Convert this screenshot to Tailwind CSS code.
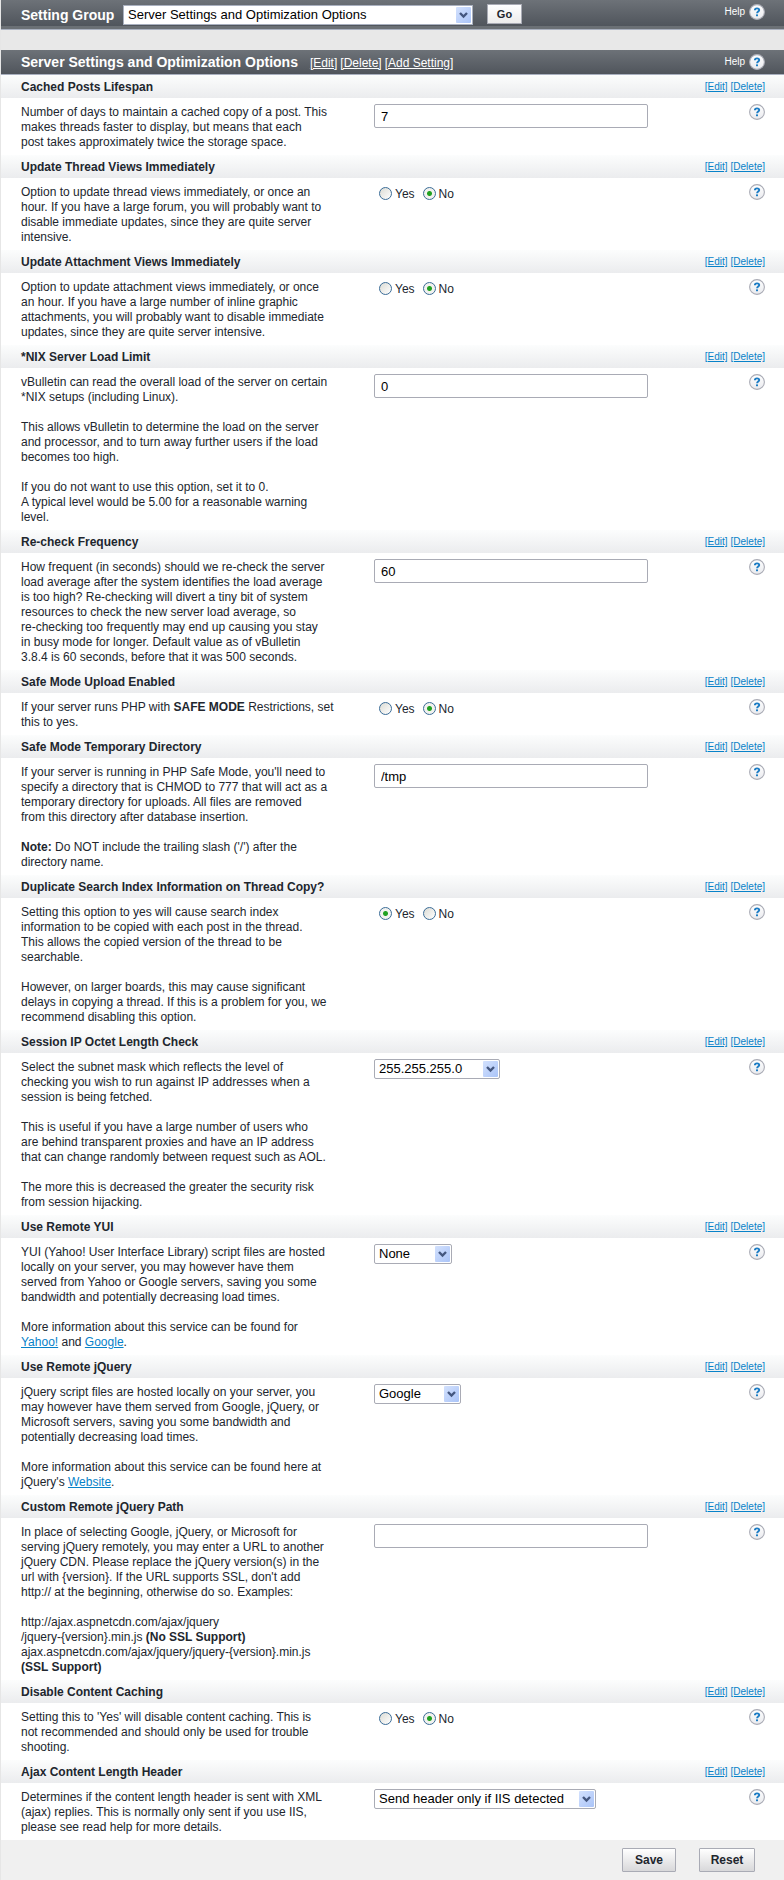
<!DOCTYPE html>
<html lang="en">
<head>
<meta charset="utf-8">
<meta name="viewport" content="width=device-width, initial-scale=1">
<title>Server Settings and Optimization Options</title>
<script src="https://cdn.jsdelivr.net/npm/@tailwindcss/browser@4"></script>
</head>
<body class="bg-[#f0f0f0] font-['Liberation_Sans',Arial,sans-serif] text-xs text-[#21262e]">
<svg class="absolute size-0" aria-hidden="true">
  <linearGradient id="disc" x1="0" y1="0" x2="0" y2="1"><stop offset="0" stop-color="#ffffff"/><stop offset="1" stop-color="#e9eaee"/></linearGradient>
  <linearGradient id="drop" x1="0" y1="0" x2="1" y2="1"><stop offset="0" stop-color="#d3e1fd"/><stop offset="1" stop-color="#aac4f8"/></linearGradient>
  <symbol id="help" viewBox="0 0 16 16">
    <circle cx="8" cy="8" r="7.4" fill="url(#disc)" stroke="#a9abb5" stroke-width="1.1"/>
    <path d="M5.9 6.3C5.9 4.9 6.8 4.4 8 4.4s2.2.6 2.2 1.7c0 1.5-2.1 1.5-2.1 3.2" fill="none" stroke="#1c7cc4" stroke-width="1.9"/>
    <rect x="7" y="10.4" width="2" height="1.8" fill="#1c7cc4"/>
  </symbol>
  <symbol id="arrow" viewBox="0 0 15 16">
    <rect width="15" height="16" rx="1" fill="url(#drop)"/>
    <path d="M4 6l3.5 3.5L11 6" fill="none" stroke="#44577f" stroke-width="2.4"/>
  </symbol>
</svg>

<form class="border-l border-[#e6e6e6]">
  <div class="border-b border-[#a9b0bf] bg-[#6b7075] pb-[3px]">
    <div class="flex h-[26px] items-start justify-between bg-linear-to-b from-[#6d7278] to-[#50555c] pl-5 pr-[19px]">
      <div class="flex items-start">
        <label for="group" class="w-[102px] pt-[6px] text-[14px] leading-[18px] font-bold whitespace-nowrap text-white">Setting Group</label>
        <div class="relative mt-[5px]">
          <select id="group" class="block h-5 w-[350px] appearance-none border border-[#a9b0bf] bg-white pl-1 text-[13px] leading-[18px] text-black"><option>Server Settings and Optimization Options</option></select>
          <svg class="pointer-events-none absolute top-[2px] right-[2px] h-4 w-[15px]"><use href="#arrow"/></svg>
        </div>
        <button type="button" class="mt-1 ml-[14px] h-5 w-[35px] border border-[#a9abb5] bg-linear-to-b from-white to-[#ececec] text-[11px] leading-[18px] font-bold">Go</button>
      </div>
      <a href="#" class="mt-1 flex gap-1 text-[10px] leading-[15px] text-white">Help <svg class="size-4"><use href="#help"/></svg></a>
    </div>
  </div>

  <div class="h-5 bg-[#e8e8e8]"></div>

  <div class="flex h-[25px] items-start justify-between border-b border-[#a9b0bf] bg-linear-to-b from-[#6d7278] to-[#50555c] pl-5 pr-[19px] text-white">
    <div class="flex items-baseline gap-3 pt-[3px]">
      <h1 class="text-[14px] leading-[18px] font-bold">Server Settings and Optimization Options</h1>
      <div class="flex gap-[3px] leading-[18px] underline"><a href="#">[Edit]</a><a href="#">[Delete]</a><a href="#">[Add Setting]</a></div>
    </div>
    <a href="#" class="mt-1 flex gap-1 text-[10px] leading-[15px]">Help <svg class="size-4"><use href="#help"/></svg></a>
  </div>

  <main id="settings" class="bg-white
    [&_header]:flex [&_header]:h-[23px] [&_header]:items-start [&_header]:justify-between [&_header]:bg-linear-to-b [&_header]:from-[#fcfdfd] [&_header]:to-[#ebecee] [&_header]:pl-5 [&_header]:pr-[19px]
    [&_h2]:pt-[5px] [&_h2]:font-bold [&_h2]:leading-[15px]
    [&_nav]:flex [&_nav]:gap-[3px] [&_nav]:pt-1 [&_nav]:text-[10px] [&_nav]:leading-[15px] [&_nav]:text-[#0782c9] [&_nav]:underline
    [&_article]:grid [&_article]:grid-cols-[353px_1fr_auto] [&_article]:items-start [&_article]:pt-[6px] [&_article]:pb-[5px] [&_article]:pl-5 [&_article]:pr-[19px]
    [&_p]:pt-px [&_p]:leading-[15px] [&_p]:whitespace-pre-line [&_p_a]:text-[#0782c9] [&_p_a]:underline
    [&_input[type=text]]:h-6 [&_input[type=text]]:w-[274px] [&_input[type=text]]:rounded-[2px] [&_input[type=text]]:border [&_input[type=text]]:border-[#a9abb5] [&_input[type=text]]:px-[6px] [&_input[type=text]]:text-[13px] [&_input[type=text]]:text-black
    [&_fieldset]:flex [&_fieldset]:gap-2 [&_fieldset]:pt-[2px] [&_fieldset]:pl-[5px]
    [&_label]:flex [&_label]:gap-[3px] [&_label]:leading-[17px]
    [&_input[type=radio]]:mt-px [&_input[type=radio]]:size-[13px] [&_input[type=radio]]:appearance-none [&_input[type=radio]]:rounded-full [&_input[type=radio]]:border [&_input[type=radio]]:border-[#3b6c97] [&_input[type=radio]]:bg-linear-to-br [&_input[type=radio]]:from-[#dcdcd5] [&_input[type=radio]]:to-white
    [&_input:checked]:bg-[radial-gradient(circle,#21a121_0_2px,#f2f2ef_3px)]!
    [&_select]:block [&_select]:h-5 [&_select]:w-full [&_select]:appearance-none [&_select]:rounded-[2px] [&_select]:border [&_select]:border-[#a9abb5] [&_select]:bg-white [&_select]:pl-1 [&_select]:text-[13px] [&_select]:leading-[18px] [&_select]:text-black
    [&_div_svg]:pointer-events-none [&_div_svg]:absolute [&_div_svg]:top-[2px] [&_div_svg]:right-[2px] [&_div_svg]:h-4 [&_div_svg]:w-[15px]
    [&_button]:size-4 [&_button_svg]:size-4">

    <section>
      <header><h2>Cached Posts Lifespan</h2><nav><a href="#">[Edit]</a><a href="#">[Delete]</a></nav></header>
      <article><p>Number of days to maintain a cached copy of a post. This
makes threads faster to display, but means that each
post takes approximately twice the storage space.</p>
      <input type="text" value="7" aria-label="Cached Posts Lifespan"><button type="button" aria-label="Help"><svg><use href="#help"/></svg></button></article>
    </section>

    <section>
      <header><h2>Update Thread Views Immediately</h2><nav><a href="#">[Edit]</a><a href="#">[Delete]</a></nav></header>
      <article><p>Option to update thread views immediately, or once an
hour. If you have a large forum, you will probably want to
disable immediate updates, since they are quite server
intensive.</p>
      <fieldset aria-label="Update Thread Views Immediately"><label><input type="radio" name="thread">Yes</label><label><input type="radio" name="thread" checked>No</label></fieldset><button type="button" aria-label="Help"><svg><use href="#help"/></svg></button></article>
    </section>

    <section>
      <header><h2>Update Attachment Views Immediately</h2><nav><a href="#">[Edit]</a><a href="#">[Delete]</a></nav></header>
      <article><p>Option to update attachment views immediately, or once
an hour. If you have a large number of inline graphic
attachments, you will probably want to disable immediate
updates, since they are quite server intensive.</p>
      <fieldset aria-label="Update Attachment Views Immediately"><label><input type="radio" name="attach">Yes</label><label><input type="radio" name="attach" checked>No</label></fieldset><button type="button" aria-label="Help"><svg><use href="#help"/></svg></button></article>
    </section>

    <section>
      <header><h2>*NIX Server Load Limit</h2><nav><a href="#">[Edit]</a><a href="#">[Delete]</a></nav></header>
      <article><p>vBulletin can read the overall load of the server on certain
*NIX setups (including Linux).

This allows vBulletin to determine the load on the server
and processor, and to turn away further users if the load
becomes too high.

If you do not want to use this option, set it to 0.
A typical level would be 5.00 for a reasonable warning
level.</p>
      <input type="text" value="0" aria-label="*NIX Server Load Limit"><button type="button" aria-label="Help"><svg><use href="#help"/></svg></button></article>
    </section>

    <section>
      <header><h2>Re-check Frequency</h2><nav><a href="#">[Edit]</a><a href="#">[Delete]</a></nav></header>
      <article><p>How frequent (in seconds) should we re-check the server
load average after the system identifies the load average
is too high? Re-checking will divert a tiny bit of system
resources to check the new server load average, so
re-checking too frequently may end up causing you stay
in busy mode for longer. Default value as of vBulletin
3.8.4 is 60 seconds, before that it was 500 seconds.</p>
      <input type="text" value="60" aria-label="Re-check Frequency"><button type="button" aria-label="Help"><svg><use href="#help"/></svg></button></article>
    </section>

    <section>
      <header><h2>Safe Mode Upload Enabled</h2><nav><a href="#">[Edit]</a><a href="#">[Delete]</a></nav></header>
      <article><p>If your server runs PHP with <b>SAFE MODE</b> Restrictions, set
this to yes.</p>
      <fieldset aria-label="Safe Mode Upload Enabled"><label><input type="radio" name="safe">Yes</label><label><input type="radio" name="safe" checked>No</label></fieldset><button type="button" aria-label="Help"><svg><use href="#help"/></svg></button></article>
    </section>

    <section>
      <header><h2>Safe Mode Temporary Directory</h2><nav><a href="#">[Edit]</a><a href="#">[Delete]</a></nav></header>
      <article><p>If your server is running in PHP Safe Mode, you'll need to
specify a directory that is CHMOD to 777 that will act as a
temporary directory for uploads. All files are removed
from this directory after database insertion.

<b>Note:</b> Do NOT include the trailing slash ('/') after the
directory name.</p>
      <input type="text" value="/tmp" aria-label="Safe Mode Temporary Directory"><button type="button" aria-label="Help"><svg><use href="#help"/></svg></button></article>
    </section>

    <section>
      <header><h2>Duplicate Search Index Information on Thread Copy?</h2><nav><a href="#">[Edit]</a><a href="#">[Delete]</a></nav></header>
      <article><p>Setting this option to yes will cause search index
information to be copied with each post in the thread.
This allows the copied version of the thread to be
searchable.

However, on larger boards, this may cause significant
delays in copying a thread. If this is a problem for you, we
recommend disabling this option.</p>
      <fieldset aria-label="Duplicate Search Index Information on Thread Copy?"><label><input type="radio" name="dup" checked>Yes</label><label><input type="radio" name="dup">No</label></fieldset><button type="button" aria-label="Help"><svg><use href="#help"/></svg></button></article>
    </section>

    <section>
      <header><h2>Session IP Octet Length Check</h2><nav><a href="#">[Edit]</a><a href="#">[Delete]</a></nav></header>
      <article><p>Select the subnet mask which reflects the level of
checking you wish to run against IP addresses when a
session is being fetched.

This is useful if you have a large number of users who
are behind transparent proxies and have an IP address
that can change randomly between request such as AOL.

The more this is decreased the greater the security risk
from session hijacking.</p>
      <div class="relative w-[126px]"><select aria-label="Session IP Octet Length Check"><option>255.255.255.0</option></select><svg><use href="#arrow"/></svg></div><button type="button" aria-label="Help"><svg><use href="#help"/></svg></button></article>
    </section>

    <section>
      <header><h2>Use Remote YUI</h2><nav><a href="#">[Edit]</a><a href="#">[Delete]</a></nav></header>
      <article><p>YUI (Yahoo! User Interface Library) script files are hosted
locally on your server, you may however have them
served from Yahoo or Google servers, saving you some
bandwidth and potentially decreasing load times.

More information about this service can be found for
<a href="#">Yahoo!</a> and <a href="#">Google</a>.</p>
      <div class="relative w-[78px]"><select aria-label="Use Remote YUI"><option>None</option></select><svg><use href="#arrow"/></svg></div><button type="button" aria-label="Help"><svg><use href="#help"/></svg></button></article>
    </section>

    <section>
      <header><h2>Use Remote jQuery</h2><nav><a href="#">[Edit]</a><a href="#">[Delete]</a></nav></header>
      <article><p>jQuery script files are hosted locally on your server, you
may however have them served from Google, jQuery, or
Microsoft servers, saving you some bandwidth and
potentially decreasing load times.

More information about this service can be found here at
jQuery's <a href="#">Website</a>.</p>
      <div class="relative w-[87px]"><select aria-label="Use Remote jQuery"><option>Google</option></select><svg><use href="#arrow"/></svg></div><button type="button" aria-label="Help"><svg><use href="#help"/></svg></button></article>
    </section>

    <section>
      <header><h2>Custom Remote jQuery Path</h2><nav><a href="#">[Edit]</a><a href="#">[Delete]</a></nav></header>
      <article><p>In place of selecting Google, jQuery, or Microsoft for
serving jQuery remotely, you may enter a URL to another
jQuery CDN. Please replace the jQuery version(s) in the
url with {version}. If the URL supports SSL, don't add
http:// at the beginning, otherwise do so. Examples:

http://ajax.aspnetcdn.com/ajax/jquery
/jquery-{version}.min.js <b>(No SSL Support)</b>
ajax.aspnetcdn.com/ajax/jquery/jquery-{version}.min.js
<b>(SSL Support)</b></p>
      <input type="text" value="" aria-label="Custom Remote jQuery Path"><button type="button" aria-label="Help"><svg><use href="#help"/></svg></button></article>
    </section>

    <section>
      <header><h2>Disable Content Caching</h2><nav><a href="#">[Edit]</a><a href="#">[Delete]</a></nav></header>
      <article><p>Setting this to 'Yes' will disable content caching. This is
not recommended and should only be used for trouble
shooting.</p>
      <fieldset aria-label="Disable Content Caching"><label><input type="radio" name="cache">Yes</label><label><input type="radio" name="cache" checked>No</label></fieldset><button type="button" aria-label="Help"><svg><use href="#help"/></svg></button></article>
    </section>

    <section>
      <header><h2>Ajax Content Length Header</h2><nav><a href="#">[Edit]</a><a href="#">[Delete]</a></nav></header>
      <article><p>Determines if the content length header is sent with XML
(ajax) replies. This is normally only sent if you use IIS,
please see read help for more details.</p>
      <div class="relative w-[222px]"><select aria-label="Ajax Content Length Header"><option>Send header only if IIS detected</option></select><svg><use href="#arrow"/></svg></div><button type="button" aria-label="Help"><svg><use href="#help"/></svg></button></article>
    </section>
  </main>

  <footer class="flex justify-end gap-[23px] bg-[#f0f0f0] py-2 pr-[29px]">
    <button type="submit" class="h-6 w-[54px] rounded-[1px] border border-[#a9abb5] bg-linear-to-b from-white to-[#d8d8da] font-bold">Save</button>
    <button type="reset" class="h-6 w-[56px] rounded-[1px] border border-[#a9abb5] bg-linear-to-b from-white to-[#d8d8da] font-bold">Reset</button>
  </footer>
</form>
</body>
</html>
